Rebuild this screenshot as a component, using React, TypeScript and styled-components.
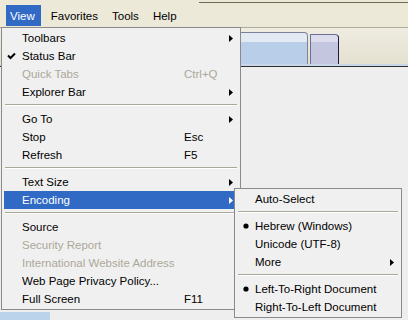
import styled, { createGlobalStyle } from "styled-components";

const GlobalStyle = createGlobalStyle`
  html, body {
    margin: 0;
    padding: 0;
    background: #eeeeee;
  }
  body {
    font-family: "Liberation Sans", Arial, sans-serif;
    font-size: 11.5px;
    color: #000;
  }
`;

const Window = styled.div`
  position: relative;
  width: 408px;
  height: 320px;
  overflow: hidden;
  display: flex;
  flex-direction: column;
  background: #eeeeee;
`;

const MenuBar = styled.div`
  height: 27px;
  box-sizing: border-box;
  padding: 5px 0 1px 6px;
  display: flex;
  gap: 6px;
  background: #ece9d8;
`;

const MenuTitle = styled.div<{ $open?: boolean }>`
  display: flex;
  align-items: center;
  padding: ${(p) => (p.$open ? "0 6px 0 4px" : "0 4px")};
  background: ${(p) => (p.$open ? "#316ac5" : "transparent")};
  color: ${(p) => (p.$open ? "#fff" : "#000")};
`;

// the frame line that runs along the top of the bar after the last menu
const BarFiller = styled.div`
  flex: 1;
  margin: -3px 0 0 12px;
  height: 0;
  border-top: 1px solid #6e6c52;
`;

const TabStrip = styled.div`
  height: 40px;
  box-sizing: border-box;
  display: flex;
  align-items: flex-end;
  gap: 2px;
  padding: 0 0 2px 180px;
  border-top: 1px solid #aeab98;
  border-bottom: 1px solid #2e2e2e;
  background: linear-gradient(#efede2, #e3e0cf);
  box-shadow: inset 0 -2px 0 #c8d7ea;
`;

const Tab = styled.div<{ $current?: boolean }>`
  box-sizing: border-box;
  width: ${(p) => (p.$current ? "128px" : "29px")};
  height: ${(p) => (p.$current ? "32px" : "30px")};
  border: 1px solid ${(p) => (p.$current ? "#7d8296" : "#6c7192")};
  border-right-color: ${(p) => (p.$current ? "#7d8296" : "#1c1c40")};
  border-bottom: none;
  border-radius: 0 4px 0 0;
  background: ${(p) =>
    p.$current
      ? "linear-gradient(#e4eaf3 0, #e4eaf3 30%, #b9cfe9 30%)"
      : "linear-gradient(#dcdcec 0, #dcdcec 25%, #c4c6df 25%)"};
`;

const Content = styled.div`
  flex: 1;
  display: flex;
  align-items: flex-end;
`;

const PageEdge = styled.div`
  width: 50px;
  height: 8px;
  background: #bcd3ec;
`;

const Menu = styled.div<{ $left: number; $top: number; $width: number }>`
  position: absolute;
  left: ${(p) => p.$left}px;
  top: ${(p) => p.$top}px;
  width: ${(p) => p.$width}px;
  box-sizing: border-box;
  padding: 1px 2px;
  border: 1px solid #8a8a8a;
  background: #f0f0f0;
`;

const Item = styled.div<{ $active?: boolean; $disabled?: boolean }>`
  height: 18px;
  display: grid;
  grid-template-columns: 18px 1fr 36px 18px;
  align-items: center;
  white-space: nowrap;
  background: ${(p) => (p.$active ? "#316ac5" : "transparent")};
  color: ${(p) => (p.$active ? "#fff" : p.$disabled ? "#aca899" : "#000")};
`;

const Marker = styled.span`
  display: flex;
  justify-content: center;
  align-items: center;
`;

const Shortcut = styled.span``;

const ArrowCell = styled.span`
  display: flex;
  justify-content: flex-end;
  padding-right: 5px;
`;

const Separator = styled.div`
  margin: 3px 1px 4px;
  border-top: 1px solid #aca899;
  border-bottom: 1px solid #fff;
`;

const Check = () => (
  <svg width="9" height="8" viewBox="0 0 9 8" style={{ marginRight: 3 }}>
    <path d="M1 3.5 L3.5 6 L8 1.5" fill="none" stroke="#000" strokeWidth="2" />
  </svg>
);

const Bullet = () => (
  <svg width="6" height="6" viewBox="0 0 6 6">
    <circle cx="3" cy="3" r="2.6" fill="#000" />
  </svg>
);

const Arrow = () => (
  <svg width="4" height="7" viewBox="0 0 4 7">
    <polygon points="0,0 4,3.5 0,7" fill="currentColor" />
  </svg>
);

type Entry =
  | "sep"
  | {
      label: string;
      shortcut?: string;
      sub?: boolean;
      mark?: "check" | "bullet";
      disabled?: boolean;
      active?: boolean;
    };

const viewMenu: Entry[] = [
  { label: "Toolbars", sub: true },
  { label: "Status Bar", mark: "check" },
  { label: "Quick Tabs", shortcut: "Ctrl+Q", disabled: true },
  { label: "Explorer Bar", sub: true },
  "sep",
  { label: "Go To", sub: true },
  { label: "Stop", shortcut: "Esc" },
  { label: "Refresh", shortcut: "F5" },
  "sep",
  { label: "Text Size", sub: true },
  { label: "Encoding", sub: true, active: true },
  "sep",
  { label: "Source" },
  { label: "Security Report", disabled: true },
  { label: "International Website Address", disabled: true },
  { label: "Web Page Privacy Policy..." },
  { label: "Full Screen", shortcut: "F11" },
];

const encodingMenu: Entry[] = [
  { label: "Auto-Select" },
  "sep",
  { label: "Hebrew (Windows)", mark: "bullet" },
  { label: "Unicode (UTF-8)" },
  { label: "More", sub: true },
  "sep",
  { label: "Left-To-Right Document", mark: "bullet" },
  { label: "Right-To-Left Document" },
];

const MenuList = ({ entries }: { entries: Entry[] }) => (
  <>
    {entries.map((e, i) =>
      e === "sep" ? (
        <Separator key={i} />
      ) : (
        <Item key={i} $active={e.active} $disabled={e.disabled}>
          <Marker>
            {e.mark === "check" && <Check />}
            {e.mark === "bullet" && <Bullet />}
          </Marker>
          <span>{e.label}</span>
          <Shortcut>{e.shortcut}</Shortcut>
          <ArrowCell>{e.sub && <Arrow />}</ArrowCell>
        </Item>
      )
    )}
  </>
);

export default function App() {
  return (
    <>
      <GlobalStyle />
      <Window>
        <MenuBar>
          <MenuTitle $open>View</MenuTitle>
          <MenuTitle>Favorites</MenuTitle>
          <MenuTitle>Tools</MenuTitle>
          <MenuTitle>Help</MenuTitle>
          <BarFiller />
        </MenuBar>
        <TabStrip>
          <Tab $current />
          <Tab />
        </TabStrip>
        <Content>
          <PageEdge />
        </Content>

        <Menu $left={1} $top={27} $width={240}>
          <MenuList entries={viewMenu} />
        </Menu>
        <Menu $left={234} $top={188} $width={168}>
          <MenuList entries={encodingMenu} />
        </Menu>
      </Window>
    </>
  );
}
